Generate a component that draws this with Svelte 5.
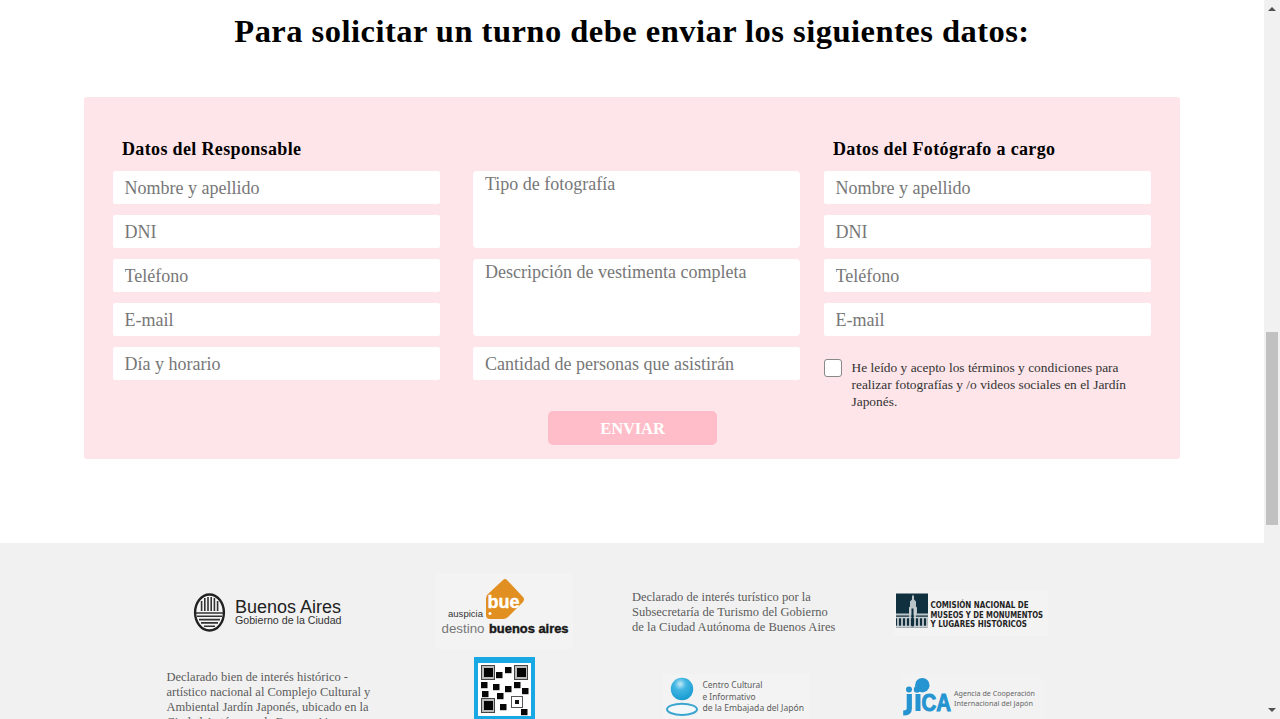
<script>
  const qrDots = [[22,15],[31,10],[7,25],[19,27],[31,29],[40,25],[48,31],[8,34],[23,36],[26,47],[47,52]];
  const qrFinders = [[6,8],[39,8],[6,41]];
</script>

<div class="page">
  <main>
    <h2>Para solicitar un turno debe enviar los siguientes datos:</h2>
    <form onsubmit={(e) => e.preventDefault()}>
      <div class="col first">
        <h3>Datos del Responsable</h3>
        <input placeholder="Nombre y apellido" />
        <input placeholder="DNI" />
        <input placeholder="Teléfono" />
        <input placeholder="E-mail" />
        <input placeholder="Día y horario" />
      </div>
      <div class="col middle">
        <textarea placeholder="Tipo de fotografía"></textarea>
        <textarea placeholder="Descripción de vestimenta completa"></textarea>
        <input placeholder="Cantidad de personas que asistirán" />
        <button>ENVIAR</button>
      </div>
      <div class="col last">
        <h3>Datos del Fotógrafo a cargo</h3>
        <input placeholder="Nombre y apellido" />
        <input placeholder="DNI" />
        <input placeholder="Teléfono" />
        <input placeholder="E-mail" />
        <label>
          <span class="check"></span>
          <span>He leído y acepto los términos y condiciones para<br />realizar fotografías y /o videos sociales en el Jardín<br />Japonés.</span>
        </label>
      </div>
    </form>
  </main>

  <footer>
    <div class="cell ba">
      <svg width="150" height="42" viewBox="0 0 150 42">
        <ellipse cx="16.5" cy="20.5" rx="14.4" ry="18" fill="#f5f5f5" stroke="#222" stroke-width="2.4" />
        <g stroke="#333" stroke-width="1.6">
          <path d="M8.6 9V19M11.8 6V19M15 5V19M18.2 5V19M21.4 6V19M24.6 9V19" />
          <path d="M3 21H30M4 24.3H29M6 27.6H27M8 30.9H25M11 34.2H22" />
        </g>
        <text x="42" y="21" font-size="17.5" fill="#222" textLength="106" lengthAdjust="spacingAndGlyphs">Buenos Aires</text>
        <text x="42" y="32" font-size="10.8" fill="#333" textLength="106.5" lengthAdjust="spacingAndGlyphs">Gobierno de la Ciudad</text>
      </svg>
    </div>
    <div class="cell bue">
      <svg width="138" height="76" viewBox="0 0 138 76">
        <rect width="138" height="76" fill="#f3f3f3" />
        <path d="M68 7Q70 5 72 7L88 24Q90 26 88 29L73 44Q71 46 68 46H55Q51 46 51 42V25Q51 22 54 20Z" fill="#e18f20" />
        <text x="52.5" y="35" font-size="19" font-weight="700" fill="#fff" stroke="#fff" stroke-width=".4" textLength="32" lengthAdjust="spacingAndGlyphs">bue</text>
        <circle cx="55" cy="40.5" r="1.5" fill="#fff" />
        <text x="13" y="44" font-size="9.5" fill="#333" textLength="35" lengthAdjust="spacingAndGlyphs">auspicia</text>
        <text x="6.5" y="59.5" font-size="12.5" fill="#777" textLength="43" lengthAdjust="spacingAndGlyphs">destino</text>
        <text x="54" y="59.5" font-size="12.5" font-weight="700" fill="#171717" stroke="#171717" stroke-width=".4" textLength="79.5" lengthAdjust="spacingAndGlyphs">buenos aires</text>
      </svg>
    </div>
    <p class="cell note one"><span>Declarado de interés turístico por la</span><br /><span>Subsecretaría de Turismo del Gobierno</span><br /><span>de la Ciudad Autónoma de Buenos Aires</span></p>
    <div class="cell museum">
      <svg width="154" height="46" viewBox="0 0 154 46">
        <rect width="154" height="46" fill="#f3f3f3" />
        <g transform="translate(1 -.5)">
          <rect x="1" y="4" width="32" height="34" fill="#10303f" />
          <path d="M15 17V12L17 10V7L18 5L19 7V10L21 12V17L22 18V24H33V26H1V24H14V18Z" fill="#bac3c6" />
          <path d="M1 28H33M1 37H33" stroke="#c9cfd0" stroke-width="1.5" />
          <path d="M3 28V38M7 28V38M11 28V38M15 18V38M20 18V38M24 28V38M28 28V38M32 28V38" stroke="#cbd1d2" stroke-width="1.7" />
          <path d="M17.5 19V37" stroke="#10303f" stroke-width="2" />
        </g>
        <g class="vera" font-size="8" font-weight="700" fill="#242424">
          <text x="36.5" y="18" textLength="98" lengthAdjust="spacingAndGlyphs">COMISIÓN NACIONAL DE</text>
          <text x="36.5" y="27.5" textLength="112.5" lengthAdjust="spacingAndGlyphs">MUSEOS Y DE MONUMENTOS</text>
          <text x="36.5" y="36.7" textLength="96.5" lengthAdjust="spacingAndGlyphs">Y LUGARES HISTÓRICOS</text>
        </g>
      </svg>
    </div>
    <p class="cell note two"><span>Declarado bien de interés histórico -</span><br /><span>artístico nacional al Complejo Cultural y</span><br /><span>Ambiental Jardín Japonés, ubicado en la</span><br /><span>Ciudad Autónoma de Buenos Aires</span></p>
    <div class="cell qr">
      <svg width="61" height="66" viewBox="0 0 61 66">
        <rect width="61" height="66" fill="#18a9e5" />
        <rect x="4" y="6" width="53" height="53" fill="#fff" />
        {#each qrFinders as [x, y]}
          <rect x={x + 1.5} y={y + 0.5} width="13" height="14" fill="#bbb" stroke="#444" />
          <rect x={x + 4} y={y + 3} width="9" height="9" fill="#050505" />
        {/each}
        {#each qrDots as [x, y]}
          <rect {x} {y} width="6.5" height="6.2" fill="#080808" />
        {/each}
        <rect x="37.5" y="39.5" width="11" height="11" fill="#fff" stroke="#555" />
        <rect x="41" y="43" width="4" height="4" fill="#111" />
      </svg>
    </div>
    <div class="cell culture">
      <svg width="148" height="54" viewBox="0 0 148 54">
        <defs>
          <radialGradient id="orb" cx=".42" cy=".28" r=".75">
            <stop offset="0" stop-color="#c5eaf7" /><stop offset=".35" stop-color="#42b7e3" /><stop offset="1" stop-color="#1699d0" />
          </radialGradient>
        </defs>
        <rect width="148" height="54" fill="#f3f3f3" />
        <circle cx="20" cy="15" r="11.2" fill="url(#orb)" />
        <ellipse cx="20" cy="35.3" rx="15" ry="5.6" fill="#f5f8fa" stroke="#3ba5cf" stroke-width="2" />
        <g class="noto" font-size="8.3" fill="#5c5c5c">
          <text x="40.5" y="14.2" textLength="60" lengthAdjust="spacingAndGlyphs">Centro Cultural</text>
          <text x="40.5" y="25.5" textLength="53" lengthAdjust="spacingAndGlyphs">e Informativo</text>
          <text x="40.5" y="36.7" textLength="101.5" lengthAdjust="spacingAndGlyphs">de la Embajada del Japón</text>
        </g>
      </svg>
    </div>
    <div class="cell jica">
      <svg width="146" height="54" viewBox="0 0 146 54">
        <rect width="146" height="54" fill="#f2f2f2" />
        <g fill="#2594d1">
          <circle cx="9" cy="15.5" r="3" />
          <circle cx="22.3" cy="11.2" r="7.2" />
          <circle cx="17" cy="15.5" r="3.2" />
        </g>
        <path d="M9.3 20V34.5Q9.3 39 3.2 39" fill="none" stroke="#2594d1" stroke-width="5.2" />
        <path d="M18 20V37" stroke="#2594d1" stroke-width="5" />
        <text x="21.5" y="37" font-size="24" font-weight="700" fill="#2594d1" stroke="#2594d1" textLength="29.5" lengthAdjust="spacingAndGlyphs">CA</text>
        <g class="noto" font-size="7.3" fill="#666">
          <text x="54" y="22.3" textLength="81" lengthAdjust="spacingAndGlyphs">Agencia de Cooperación</text>
          <text x="54" y="32" textLength="79" lengthAdjust="spacingAndGlyphs">Internacional del Japón</text>
        </g>
      </svg>
    </div>
  </footer>
</div>
<div class="scrollbar"><i class="up"></i><div class="thumb"></div><i class="down"></i></div>

<style>
  :global(body) { overflow: hidden; }
  :global(#app) { display: flex; height: 719px; overflow: hidden; }
  * { box-sizing: border-box; }
  .page { width: 1264px; height: 719px; overflow: hidden; background: #fff; font-family: "Liberation Serif", serif; }
  main { height: 543px; padding: 12px 84px 0; }
  h2 { margin: 0; height: 38px; line-height: 38px; font-size: 32.5px; letter-spacing: .48px; text-align: center; white-space: nowrap; color: #000; }
  form { margin-top: 47px; height: 362px; padding: 38px 28px 0 28.5px; background: #fde5e9; border-radius: 3px; display: grid; grid-template-columns: 327.5px 327px 327.5px; justify-content: start; }
  .col { display: flex; flex-direction: column; gap: 11px; }
  .middle { margin: 36px -33px 0 33px; }
  .last { margin-left: 56.5px; margin-right: -56.5px; }
  h3 { margin: 0 0 -1px; padding-left: 9.5px; height: 26px; line-height: 28px; font-size: 18px; letter-spacing: .35px; white-space: nowrap; }
  input, textarea { display: block; width: 100%; flex: none; border: 0; border-radius: 2px; outline: 0; resize: none; background: #fff; margin: 0; font: 18px "Liberation Serif", serif; letter-spacing: 0; }
  input { height: 33px; padding: 1px 12px 0; }
  textarea { height: 77px; padding: 3px 12px; border-radius: 4px; overflow: hidden; }
  ::placeholder { color: #777; opacity: 1; }
  button { width: 169px; height: 34px; margin: 20px 0 0 75px; padding: 1px 0 0; border: 0; border-radius: 5px; background: #ffbdc9; color: #fff; font: 700 16.5px "Liberation Serif", serif; letter-spacing: -.1px; }
  label { display: flex; gap: 10px; font-size: 13.4px; line-height: 17px; color: #333; white-space: nowrap; padding-top: 12px; }
  .check { width: 18px; height: 18px; border: 1px solid #888; border-radius: 3px; background: #fff; flex: none; }
  footer { height: 176px; padding: 30px 0 0 151px; background: #f1f1f1; display: grid; grid-template-columns: repeat(4, 233px); grid-template-rows: 84px 100px; }
  .cell { margin: 0; min-width: 0; }
  svg { display: block; font-family: "Liberation Sans", sans-serif; }
  .vera { font-family: "DejaVu Sans", sans-serif; }
  .noto { font-family: "Noto Sans", sans-serif; }
  .note { font-size: 12.5px; line-height: 15px; color: #5c5c5c; white-space: nowrap; padding-left: 15px; }
  .one { padding-top: 17px; }
  .two { padding: 13px 0 0 15.5px; }
  .ba { padding: 19px 0 0 42px; }
  .bue { padding-left: 51px; }
  .museum { padding: 17px 0 0 44px; }
  .qr { padding-left: 90px; }
  .culture { padding: 17px 0 0 45px; }
  .jica { padding: 17px 0 0 50px; }
  .scrollbar { width: 16px; height: 719px; background: #f1f1f1; display: flex; flex-direction: column; align-items: center; justify-content: space-between; padding: 7px 0; }
  .thumb { width: 12px; height: 193px; background: #c1c1c1; margin-top: 138px; }
  i { width: 0; height: 0; border: 4px solid transparent; }
  .up { border-top: 0; border-bottom-color: #505050; }
  .down { border-bottom: 0; border-top-color: #505050; }
</style>
